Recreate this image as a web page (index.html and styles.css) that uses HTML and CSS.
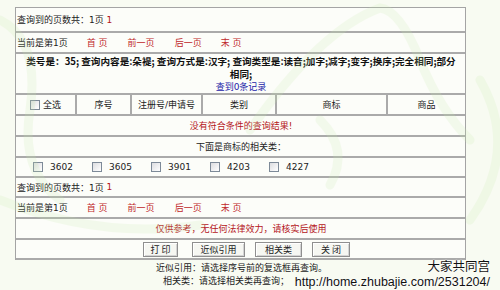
FILE: index.html
```html
<!DOCTYPE html>
<html lang="zh-CN">
<head>
<meta charset="utf-8">
<title>查询结果</title>
<link rel="stylesheet" href="styles.css">
</head>
<body>
<div class="page">
  <div class="tbl">
    <div class="row r1">查询到的页数共：1页&nbsp;<span class="red">1</span></div>
    <div class="row nav"><span>当前是第1页</span><a class="lnk">首 页</a><a class="lnk">前一页</a><a class="lnk">后一页</a><a class="lnk">末 页</a></div>
    <div class="row info">
      <p class="cond"><span class="l1">类号是：35; 查询内容是:朵褆; 查询方式是:汉字; 查询类型是:读音;加字;减字;变字;换序;完全相同;部分</span><br>相同;</p>
      <a class="blue">查到0条记录</a>
    </div>
    <div class="row head">
      <div class="cell"><span class="cb"></span>全选</div>
      <div class="cell">序号</div>
      <div class="cell">注册号/申请号</div>
      <div class="cell">类别</div>
      <div class="cell">商标</div>
      <div class="cell last">商品</div>
    </div>
    <div class="row center red">没有符合条件的查询结果!</div>
    <div class="row center">下面是商标的相关类：</div>
    <div class="row checks">
      <label class="item"><span class="cb"></span>3602</label>
      <label class="item"><span class="cb"></span>3605</label>
      <label class="item"><span class="cb"></span>3901</label>
      <label class="item"><span class="cb"></span>4203</label>
      <label class="item"><span class="cb"></span>4227</label>
    </div>
    <div class="row r8">查询到的页数共：1页&nbsp;<span class="red">1</span></div>
    <div class="row nav"><span>当前是第1页</span><a class="lnk">首 页</a><a class="lnk">前一页</a><a class="lnk">后一页</a><a class="lnk">末 页</a></div>
    <div class="row center red">仅供参考，无任何法律效力，请核实后使用</div>
    <div class="row btns">
      <button class="btn b1">打 印</button>
      <button class="btn b2">近似引用</button>
      <button class="btn b3">相关类</button>
      <button class="btn b4">关 闭</button>
    </div>
  </div>
  <div class="notes">
    <p>近似引用：请选择序号前的复选框再查询。</p>
    <p class="n2">相关类：请选择相关类再查询；</p>
  </div>
  <svg class="leaf" width="500" height="290" viewBox="0 0 500 290">
    <path d="M 250 130 Q 320 30 380 8 Q 400 10 420 60 Q 440 110 470 140" />
    <path d="M 0 20 Q 40 40 30 110 Q 20 170 60 200" />
    <path d="M 480 80 Q 520 150 470 220" />
    <path d="M 320 120 Q 350 150 330 185" />
    <path d="M 0 200 Q 100 240 200 225" />
  </svg>
  <div class="wm">大家共同宫<br>http://home.zhubajie.com/2531204/</div>
</div>
</body>
</html>
```
FILE: styles.css
```css
html, body {
  margin: 0;
  padding: 0;
}
body {
  background: #f8fbf2;
  font-family: "DejaVu Sans", "Noto Sans CJK SC", sans-serif;
  font-size: 9px;
  color: #222;
}
.page {
  position: relative;
  width: 500px;
  height: 290px;
  overflow: hidden;
  padding-top: 7px;
  box-sizing: border-box;
}
.tbl {
  margin-left: 15px;
  width: 451px;
  border: 1px solid #a4a4a4;
  border-bottom: 0;
  background: #fcfdf9;
  box-sizing: border-box;
}
.row {
  display: flex;
  align-items: center;
  box-sizing: border-box;
  border-bottom: 2px solid #aaaaaa;
  height: 21px;
  padding-left: 1px;
}
.r1 { height: 25px; }
.info { height: 41px; }
.checks { height: 20px; padding-left: 17px; }
.r8 { height: 20px; }
.btns { height: 20px; padding-left: 127px; }
.red { color: #b4151a; }
.lnk { color: #c0282a; margin-left: 19px; text-decoration: none; }
.nav .lnk:nth-of-type(2),
.nav .lnk:nth-of-type(3) { margin-left: 20px; }
.info {
  flex-direction: column;
  justify-content: center;
  padding-top: 1px;
}
.cond {
  margin: 0;
  font-family: "Noto Sans CJK SC", sans-serif;
  font-size: 9.6px;
  font-weight: bold;
  color: #111;
  text-align: center;
  line-height: 13px;
}
.l1 { white-space: nowrap; }
.blue {
  color: #1a22a8;
  line-height: 13px;
}
.center { justify-content: center; }
.head {
  display: grid;
  grid-template-columns: 61px 55px 71px 74px 111px 1fr;
  align-items: stretch;
  padding-left: 0;
}
.cell {
  display: flex;
  align-items: center;
  justify-content: center;
  border-right: 2px solid #aaaaaa;
}
.cell.last { border-right: 0; }
.cb {
  display: inline-block;
  width: 8px;
  height: 8px;
  border: 1px solid #7d8a98;
  background: linear-gradient(135deg, #dcdde0, #ffffff);
  margin-right: 3px;
  flex: none;
}
.item {
  display: flex;
  align-items: center;
  width: 59px;
}
.item .cb { margin-right: 7px; }
.btn {
  height: 15px;
  padding: 0;
  font-family: "Noto Sans CJK SC", sans-serif;
  font-size: 9px;
  line-height: 13px;
  color: #222;
  background: #f6f7f2;
  border: 1px solid #8f8f8f;
  box-shadow: inset 1px 1px 0 #ffffff, inset -1px -1px 0 #d4d4d4;
  border-radius: 0;
}
.b1 { width: 35px; margin-right: 14px; }
.b2 { width: 53px; margin-right: 10px; }
.b3 { width: 47px; margin-right: 10px; }
.b4 { width: 38px; }
.notes {
  margin-left: 156px;
  padding-top: 2px;
}
.notes p {
  margin: 0;
  line-height: 13px;
}
.notes .n2 { padding-left: 7px; }
.leaf {
  position: absolute;
  left: 0;
  top: 0;
  pointer-events: none;
  fill: none;
  stroke: #c9ecae;
  stroke-width: 9;
  stroke-linecap: round;
  opacity: 0.18;
}
.wm {
  position: absolute;
  right: 10px;
  top: 260px;
  text-align: right;
  font-family: "Liberation Sans", "Noto Sans CJK SC", sans-serif;
  font-size: 12.5px;
  line-height: 15px;
  color: #111;
  text-shadow: 0 0 1px #fff, 0 0 1px #fff, 0 0 2px #fff;
}
```
